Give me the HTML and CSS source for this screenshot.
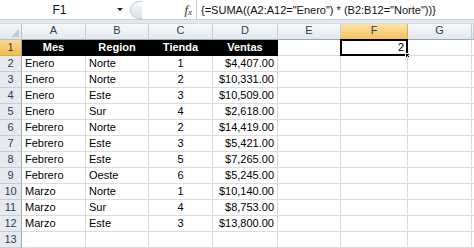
FILE: index.html
```html
<!DOCTYPE html>
<html lang="es">
<head>
  <meta charset="UTF-8">
  <title>Libro1 - SUMA matricial</title>
  <link rel="stylesheet" href="styles.css">
</head>
<body>
  <div class="formula-bar">
    <div class="name-box">
      <span class="name-text">F1</span>
      <span class="name-arrow"></span>
    </div>
    <div class="splitter"></div>
    <div class="fx"><i>f</i><span>x</span></div>
    <div class="formula">{=SUMA((A2:A12="Enero") * (B2:B12="Norte"))}</div>
  </div>
  <div class="band"></div>

  <div class="sheet">
    <div class="corner"><span class="tri"></span></div>
    <div class="col-head">A</div>
    <div class="col-head">B</div>
    <div class="col-head">C</div>
    <div class="col-head">D</div>
    <div class="col-head">E</div>
    <div class="col-head active">F</div>
    <div class="col-head">G</div>
    <div class="col-head edge"></div>

    <div class="row-head active">1</div>
    <div class="cell title">Mes</div>
    <div class="cell title">Region</div>
    <div class="cell title">Tienda</div>
    <div class="cell title">Ventas</div>
    <div class="cell"></div>
    <div class="cell num selected">2<span class="handle"></span></div>
    <div class="cell"></div>
    <div class="cell edge"></div>
  </div>
  <div class="sheet" id="body-rows"></div>

  <script>
    const data = [
      ['Enero', 'Norte', 1, '$4,407.00'],
      ['Enero', 'Norte', 2, '$10,331.00'],
      ['Enero', 'Este', 3, '$10,509.00'],
      ['Enero', 'Sur', 4, '$2,618.00'],
      ['Febrero', 'Norte', 2, '$14,419.00'],
      ['Febrero', 'Este', 3, '$5,421.00'],
      ['Febrero', 'Este', 5, '$7,265.00'],
      ['Febrero', 'Oeste', 6, '$5,245.00'],
      ['Marzo', 'Norte', 1, '$10,140.00'],
      ['Marzo', 'Sur', 4, '$8,753.00'],
      ['Marzo', 'Este', 3, '$13,800.00'],
      ['', '', '', '']
    ];

    const rows = document.getElementById('body-rows');
    data.forEach((r, i) => {
      let html = '<div class="row-head">' + (i + 2) + '</div>';
      html += '<div class="cell">' + r[0] + '</div>';
      html += '<div class="cell">' + r[1] + '</div>';
      html += '<div class="cell mid">' + r[2] + '</div>';
      html += '<div class="cell num">' + r[3] + '</div>';
      html += '<div class="cell"></div><div class="cell"></div><div class="cell"></div><div class="cell edge"></div>';
      rows.insertAdjacentHTML('beforeend', html);
    });
  </script>
</body>
</html>
```

FILE: styles.css
```css
* {
  box-sizing: border-box;
  margin: 0;
  padding: 0;
}
body {
  font-family: 'Liberation Sans', Arial, sans-serif;
  font-size: 11px;
  color: #111;
  background: #fff;
  width: 474px;
  height: 248px;
  overflow: hidden;
}
.formula-bar {
  display: flex;
  align-items: center;
  height: 20px;
  background: #fff;
  border-bottom: 1px solid #c9ced6;
}
.name-box {
  width: 128px;
  height: 20px;
  display: flex;
  align-items: center;
}
.name-text {
  flex: 1;
  text-align: center;
  font-size: 12px;
  padding-left: 2px;
}
.name-arrow {
  width: 0;
  height: 0;
  margin-right: 5px;
  border-left: 3px solid transparent;
  border-right: 3px solid transparent;
  border-top: 3px solid #222;
}
.splitter {
  width: 12px;
  height: 18px;
  margin-left: 2px;
  border: 1px solid #c6ccd4;
  border-right: none;
  border-radius: 9px 0 0 9px;
  background: linear-gradient(#f6f7f9, #dde2e8);
}
.fx {
  width: 54px;
  height: 20px;
  display: flex;
  align-items: center;
  justify-content: flex-end;
  padding-right: 4px;
  font-family: 'Liberation Serif', serif;
  font-size: 12px;
  color: #333;
}
.fx i {
  font-size: 13px;
}
.fx span {
  font-size: 9px;
  font-style: italic;
  margin-top: 4px;
}
.formula {
  flex: 1;
  height: 20px;
  line-height: 20px;
  padding-left: 4px;
  border-left: 1px solid #c9ced6;
  font-size: 11px;
  color: #111;
}
.band {
  height: 4px;
  background: #e5e9ee;
  border-bottom: 1px solid #d5dae1;
}
.sheet {
  display: grid;
  grid-template-columns: 22px 64px 63px 64px 65px 63px 67px 64px 2px;
  grid-auto-rows: 16px;
}
.sheet:first-of-type {
  grid-template-rows: 13px 16px;
}
.corner {
  position: relative;
  background: linear-gradient(#f4f5f7, #e2e6eb);
  border-right: 1px solid #b8c0cb;
  border-bottom: 1px solid #b8c0cb;
}
.tri {
  position: absolute;
  right: 2px;
  bottom: 2px;
  width: 0;
  height: 0;
  border-left: 8px solid transparent;
  border-bottom: 8px solid #c2c8d0;
}
.col-head {
  background: linear-gradient(#f7f8fa, #e3e7ec);
  border-right: 1px solid #c5ccd6;
  border-bottom: 1px solid #9ea9b7;
  text-align: center;
  line-height: 12px;
  color: #2c3e55;
  font-size: 11px;
}
.col-head.active {
  background: linear-gradient(#fbe3a5, #f3c15f);
  border-bottom-color: #c9962f;
  border-right-color: #d7ad5c;
}
.row-head {
  background: #e6eaef;
  border-right: 1px solid #9ea9b7;
  border-bottom: 1px solid #c5ccd6;
  text-align: center;
  line-height: 15px;
  color: #2c3e55;
}
.row-head.active {
  background: linear-gradient(#f9d98f, #f2bb4d);
  border-bottom-color: #d7ad5c;
}
.cell {
  position: relative;
  border-right: 1px solid #dadcdd;
  border-bottom: 1px solid #dadcdd;
  line-height: 15px;
  padding: 0 3px;
  white-space: nowrap;
  overflow: hidden;
  color: #000;
}
.cell.edge {
  border-right: none;
}
.cell.mid {
  text-align: center;
}
.cell.num {
  text-align: right;
}
.cell.title {
  background: #000;
  color: #fff;
  font-weight: bold;
  text-align: center;
  border-color: #000;
}
.cell.selected {
  overflow: visible;
  border: 2px solid #000;
  line-height: 12px;
  padding-right: 2px;
  margin: -1px 0 0 -1px;
  width: 68px;
  height: 17px;
}
.handle {
  position: absolute;
  right: -4px;
  bottom: -4px;
  width: 5px;
  height: 5px;
  background: #000;
  border: 1px solid #fff;
}
```
